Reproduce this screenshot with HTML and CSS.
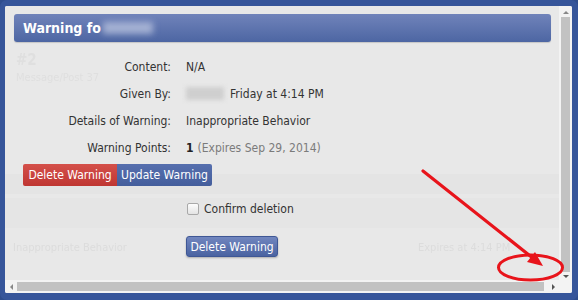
FILE: index.html
```html
<!DOCTYPE html>
<html>
<head>
<meta charset="utf-8">
<link rel="stylesheet" href="styles.css">
</head>
<body>
<div class="window">
  <div class="viewport">
    <div class="content">
      <div class="ghost">
        <div class="g-num">#2</div>
        <div class="g-line">Message/Post 37</div>
        <div class="g-band"></div>
        <div class="g-band2"></div>
        <div class="g-left">Inappropriate Behavior</div>
        <div class="g-right">Expires at 4:14 PM</div>
      </div>
      <div class="titlebar">Warning fo<span class="blur-title"></span></div>
      <dl class="info">
        <dt>Content:</dt><dd>N/A</dd>
        <dt>Given By:</dt><dd><span class="blur-name"></span>Friday at 4:14 PM</dd>
        <dt>Details of Warning:</dt><dd>Inappropriate Behavior</dd>
        <dt>Warning Points:</dt><dd><b>1</b> <span class="muted">(Expires Sep 29, 2014)</span></dd>
      </dl>
      <div class="tabs">
        <span class="tab tab-red">Delete Warning</span><span class="tab tab-blue">Update Warning</span>
      </div>
      <label class="confirm"><span class="checkbox"></span>Confirm deletion</label>
      <div class="actions"><span class="button">Delete Warning</span></div>
    </div>
    <div class="vscroll">
      <span class="arr arr-up"></span>
      <div class="vtrack"></div>
      <span class="arr arr-down"></span>
    </div>
    <div class="hscroll">
      <span class="arr arr-left"></span>
      <div class="htrack"></div>
      <span class="arr arr-right"></span>
    </div>
    <div class="corner"></div>
  </div>
  <svg class="annot" width="578" height="300" viewBox="0 0 578 300">
    <line x1="423" y1="171" x2="534" y2="259" stroke="#e8141b" stroke-width="3.2" stroke-linecap="round"/>
    <polygon points="543,266 527,262 535,252" fill="#e8141b"/>
    <ellipse cx="530.5" cy="267.5" rx="32" ry="12.5" fill="none" stroke="#e8141b" stroke-width="3"/>
  </svg>
</div>
</body>
</html>
```

FILE: styles.css
```css
html, body {
  margin: 0;
  padding: 0;
  background: #2f4d8d;
}
body {
  width: 578px;
  height: 300px;
  overflow: hidden;
  font-family: "DejaVu Sans Condensed", "DejaVu Sans", sans-serif;
  font-stretch: condensed;
  font-size: 12px;
  color: #333;
}
.window {
  position: relative;
  width: 578px;
  height: 300px;
  box-sizing: border-box;
  padding: 6px 6px 7px 5px;
  background: #36559a;
  border-radius: 7px;
}
.viewport {
  width: 100%;
  height: 100%;
  display: grid;
  grid-template-columns: 1fr 13px;
  grid-template-rows: 1fr 13px;
  background: #f4f4f4;
  border-radius: 2px;
  overflow: hidden;
}
.content {
  position: relative;
  background: #e8e8e8;
  padding: 8px 8px 0 9px;
  overflow: hidden;
}
.ghost {
  position: absolute;
  inset: 0;
  color: #dedede;
  font-size: 11px;
  filter: blur(0.7px);
}
.g-num { position: absolute; left: 11px; top: 45px; font-size: 15px; font-weight: bold; color: #dfdfdf; }
.g-line { position: absolute; left: 11px; top: 65px; color: #dfdfdf; }
.g-band { position: absolute; left: 0; right: 0; top: 168px; height: 20px; background: #e4e4e4; }
.g-band2 { position: absolute; left: 0; right: 0; top: 192px; height: 30px; background: #e5e5e5; }
.g-left { position: absolute; left: 8px; top: 235px; color: #dcdcdc; }
.g-right { position: absolute; left: 413px; top: 235px; color: #dcdcdc; }

.titlebar {
  position: relative;
  height: 28px;
  width: 537px;
  box-sizing: border-box;
  padding-left: 9px;
  line-height: 28px;
  border-radius: 3px;
  background: linear-gradient(#7083ba, #4d66a3);
  box-shadow: 0 1px 1px rgba(0,0,0,0.15);
  color: #fff;
  font-size: 14px;
  font-weight: bold;
  display: flex;
  align-items: center;
}
.blur-title {
  display: inline-block;
  width: 50px;
  height: 12px;
  margin-left: 2px;
  background: rgba(220, 226, 240, 0.55);
  filter: blur(3px);
}
.info {
  position: relative;
  margin: 11px 0 0 -9px;
  display: grid;
  grid-template-columns: 166px 1fr;
  column-gap: 15px;
  grid-auto-rows: 27px;
  align-items: center;
}
.info dt { text-align: right; margin: 0; }
.info dd { margin: 0; display: flex; align-items: center; }
.blur-name {
  display: inline-block;
  width: 38px;
  height: 13px;
  margin-right: 6px;
  background: #cfcfcf;
  filter: blur(2px);
}
.muted { color: #7b7b7b; margin-left: 4px; }
.info b { color: #222; }
.tabs {
  position: relative;
  margin: 3px 0 0 9px;
  display: flex;
}
.tab {
  height: 22px;
  line-height: 22px;
  color: #fff;
  box-sizing: border-box;
  text-align: center;
}
.tab-red {
  width: 94px;
  background: linear-gradient(#d4504a, #bf3632);
  border-radius: 2px 0 0 2px;
}
.tab-blue {
  width: 95px;
  background: linear-gradient(#566fae, #445e9c);
  border-radius: 0 2px 2px 0;
}
.confirm {
  position: relative;
  display: flex;
  align-items: center;
  margin: 15px 0 0 173px;
  height: 16px;
}
.checkbox {
  width: 10px;
  height: 10px;
  border: 1px solid #a9a9a9;
  border-radius: 2px;
  background: linear-gradient(#fdfdfd, #e4e4e4);
  margin-right: 5px;
}
.actions {
  position: relative;
  margin: 19px 0 0 172px;
  display: flex;
}
.button {
  width: 92px;
  height: 21px;
  line-height: 21px;
  box-sizing: border-box;
  text-align: center;
  color: #fff;
  border-radius: 3px;
  border: 1px solid #3f5795;
  background: linear-gradient(#7186bf, #4a63a1);
  box-shadow: 0 1px 2px rgba(0,0,0,0.25);
}
.vscroll {
  background: #f3f3f3;
  display: flex;
  flex-direction: column;
  align-items: center;
  padding-top: 5px;
}
.vtrack {
  width: 9px;
  flex: 1;
  background: #c2c2c2;
  margin: 3px 0 3px;
}
.hscroll {
  background: #f3f3f3;
  display: flex;
  align-items: center;
  padding-left: 5px;
}
.htrack {
  flex: 1;
  height: 9px;
  background: #c2c2c2;
  margin: 0 8px 0 4px;
}
.corner { background: #f3f3f3; }
.arr { width: 0; height: 0; display: block; }
.arr-up { border-left: 3px solid transparent; border-right: 3px solid transparent; border-bottom: 3px solid #888; }
.arr-down { border-left: 3px solid transparent; border-right: 3px solid transparent; border-top: 3px solid #555; margin-bottom: 2px; }
.arr-left { border-top: 3px solid transparent; border-bottom: 3px solid transparent; border-right: 3px solid #888; }
.arr-right { border-top: 3px solid transparent; border-bottom: 3px solid transparent; border-left: 3px solid #555; margin-right: 4px; }
.annot {
  position: absolute;
  left: 0;
  top: 0;
  pointer-events: none;
}
```
